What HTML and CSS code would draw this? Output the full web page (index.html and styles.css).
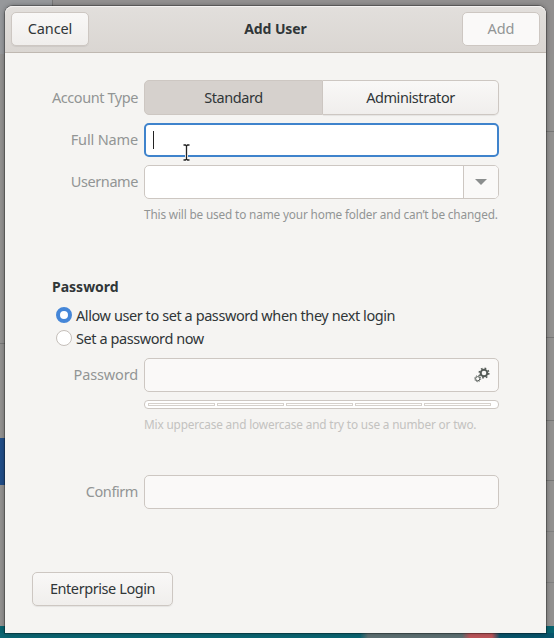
FILE: index.html
```
<!DOCTYPE html>
<html lang="en">
<head>
<meta charset="utf-8">
<title>Add User</title>
<link rel="stylesheet" href="styles.css">
</head>
<body>
<main class="dialog">
  <header class="headerbar">
    <button class="button cancel">Cancel</button>
    <h1 class="title">Add User</h1>
    <button class="button add" disabled>Add</button>
  </header>
  <section class="content">
    <div class="row">
      <span class="label account-label">Account Type</span>
      <div class="segmented"><button class="segment active">Standard</button><button class="segment admin">Administrator</button></div>
    </div>
    <div class="row">
      <span class="label name-label">Full Name</span>
      <div class="entry focused"><span class="caret"></span>
        <svg class="pointer" width="9" height="19" viewBox="0 0 9 19"><path d="M1.5 2H3.5L4.5 3L5.5 2H7.5M4.5 3V16M1.5 17H3.5L4.5 16L5.5 17H7.5" fill="none" stroke="#fff" stroke-width="3"/><path d="M1.5 2H3.5L4.5 3L5.5 2H7.5M4.5 3V16M1.5 17H3.5L4.5 16L5.5 17H7.5" fill="none" stroke="#222" stroke-width="1.3"/></svg>
      </div>
    </div>
    <div class="row">
      <span class="label">Username</span>
      <div class="entry combo"><span class="drop"><svg width="12" height="6" viewBox="0 0 12 6"><path d="M0 0H12L6 6Z" fill="#8b8e8e"/></svg></span></div>
    </div>
    <p class="hint">This will be used to name your home folder and can’t be changed.</p>
    <h2 class="heading">Password</h2>
    <div class="choice"><span class="radio checked"></span><span class="allow">Allow user to set a password when they next login</span></div>
    <div class="choice"><span class="radio"></span><span class="setnow">Set a password now</span></div>
    <div class="row password-row">
      <span class="label password-label">Password</span>
      <div class="entry insensitive">
        <svg class="gears" width="16" height="16" viewBox="0 0 16 16" fill="none" stroke="#555c58"><circle cx="10" cy="6" r="3.3" stroke-width="2"/><circle cx="10" cy="6" r="4.8" stroke-width="1.5" stroke-dasharray="1.7 2.07"/><circle cx="3.7" cy="11.7" r="2.1" stroke-width="1"/><circle cx="3.7" cy="11.7" r="3" stroke-width="1" stroke-dasharray="1.15 1.2"/></svg>
      </div>
    </div>
    <div class="meter"><i></i><i></i><i></i><i></i><i></i></div>
    <p class="hint faint">Mix uppercase and lowercase and try to use a number or two.</p>
    <div class="row confirm-row">
      <span class="label">Confirm</span>
      <div class="entry insensitive"></div>
    </div>
    <button class="button enterprise">Enterprise Login</button>
  </section>
</main>
</body>
</html>
```
FILE: styles.css
```
* { box-sizing: border-box; }
html { height: 638px; overflow: hidden; }
body {
  margin: 0; padding: 6px 8px 5px 5px; height: 638px; overflow: hidden;
  font: 14.5px/20px "Noto Sans", sans-serif; letter-spacing: -0.42px; color: #303638;
  background:
    linear-gradient(90deg, #0b6572 0 360px, #5d7073 368px 462px, #bd555a 470px 492px, #07546b 500px) 0 633px / 554px 5px no-repeat,
    linear-gradient(#07636f, #07636f) 0 626px / 554px 12px no-repeat,
    linear-gradient(#204d88, #204d88) 0 438px / 5px 47px no-repeat,
    linear-gradient(#777 0 0) 0 343px / 5px 1px no-repeat,
    linear-gradient(#777 0 0) 546px 131px / 8px 1px no-repeat,
    linear-gradient(#777 0 0) 546px 337px / 8px 1px no-repeat,
    linear-gradient(#777 0 0) 546px 420px / 8px 1px no-repeat,
    linear-gradient(#777 0 0) 546px 480px / 8px 1px no-repeat,
    linear-gradient(#818181 0 0) 546px 531px / 8px 1px no-repeat,
    linear-gradient(#818181 0 0) 546px 582px / 8px 1px no-repeat,
    linear-gradient(90deg, #96989b 52px, #777 52px 53px, #929090 53px) 0 0 / 554px 54px no-repeat,
    #929190;
}
.dialog { height: 627px; background: #f5f4f2; border-radius: 8px 8px 0 0; box-shadow: 0 0 0 1px #0004, 0 0 5px #0006; }
.headerbar { display: flex; align-items: center; justify-content: space-between; height: 47px; padding: 0 6px 1px 6px; border-bottom: 1px solid #bfb8b1; border-radius: 8px 8px 0 0; background: linear-gradient(#e2dfdc, #dad6d2); box-shadow: inset 0 1px #f3f1f0; }
.title { margin: 0; font-size: 14px; line-height: 20px; font-weight: 700; letter-spacing: -0.1px; }
.button, .segment { font: inherit; letter-spacing: inherit; color: inherit; padding: 0 0 2px; border: 1px solid #cdc7c2; border-radius: 5px; background: linear-gradient(#f9f8f7, #f0eeec); box-shadow: 0 1px 1px #0001; white-space: nowrap; }
.button { height: 34px; }
.cancel { width: 78px; letter-spacing: -0.1px; }
.add { width: 78px; letter-spacing: -0.1px; color: #929595; background: #faf9f8; box-shadow: none; }
.content { padding: 27px 47px 0 27px; }
.row { display: flex; align-items: center; height: 35px; margin-bottom: 7px; }
.label { width: 106px; margin-right: 6px; padding-bottom: 2px; text-align: right; color: #929595; white-space: nowrap; }
.name-label, .password-label { letter-spacing: -0.15px; }
.segmented { display: flex; width: 355px; height: 35px; }
.segment { width: 179px; border-radius: 5px 0 0 5px; }
.segment.active { background: #d6d1cd; box-shadow: none; }
.segment.admin { width: 176px; border-left: 0; border-radius: 0 5px 5px 0; }
.entry { position: relative; display: flex; align-items: center; justify-content: flex-end; width: 355px; height: 34px; border: 1px solid #cdc7c2; border-radius: 5px; background: #fff; }
.focused { border: 2px solid #3f83cc; justify-content: flex-start; }
.caret { width: 1px; height: 18px; margin-left: 7px; background: #222; }
.pointer { position: absolute; left: 36px; top: 18px; }
.drop { display: flex; align-items: center; justify-content: center; width: 35px; height: 32px; border-left: 1px solid #cdc7c2; border-radius: 0 4px 4px 0; background: #faf9f8; }
.insensitive { background: #faf9f8; }
.hint { margin: -1px 0 0 112px; font-size: 11.8px; line-height: 18px; letter-spacing: -0.16px; color: #929595; white-space: nowrap; }
.heading { margin: 54px 0 0 20px; font-size: 14px; line-height: 20px; font-weight: 700; letter-spacing: 0; }
.choice { display: flex; align-items: center; gap: 4px; height: 23px; margin-left: 24px; white-space: nowrap; }
.heading + .choice { margin-top: 6px; }
.radio { width: 16px; height: 16px; border: 1px solid #c5bfba; border-radius: 50%; background: #fff; }
.checked { border: 4px solid #4586d8; }
.password-row { margin: 8px 0 0; }
.gears { margin-right: 8px; }
.meter { display: flex; gap: 2px; width: 355px; height: 9px; margin: 8px 0 0 112px; padding: 2px 7px 2px 3px; border: 1px solid #cdc7c2; border-radius: 4px; background: #fff; }
.meter i { flex: 1; height: 3px; border: 1px solid #d6d1cc; }
.faint { margin-top: 6px; color: #c3c2c0; }
.confirm-row { margin: 41px 0 0; }
.enterprise { display: block; width: 141px; margin-top: 63px; }
```
